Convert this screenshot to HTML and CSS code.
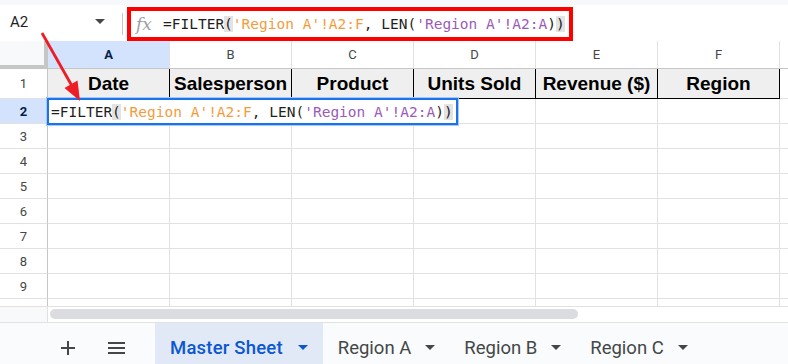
FILE: index.html
```html
<!DOCTYPE html>
<html lang="en">

<head>
	<meta charset="UTF-8">
	<meta name="viewport" content="width=device-width, initial-scale=1.0">
	<title>Master Sheet</title>
	<link rel="stylesheet" href="styles.css">
</head>

<body>
	<div class="app">
		<!-- name box + formula bar -->
		<div class="topbar">
			<div class="namebox">
				<span>A2</span>
				<span class="caret"></span>
			</div>
			<div class="divider"></div>
			<div class="fbar">
				<span class="fx">fx</span>
				<span class="formula">=FILTER<span class="paren">(</span><span class="rng1">'Region A'!A2:F</span>, LEN(<span class="rng2">'Region A'!A2:A</span>)<span class="paren">)</span></span>
			</div>
		</div>

		<!-- grid -->
		<div class="sheet">
			<div class="row hdr">
				<div class="rh corner"></div>
				<div class="c sel">A</div>
				<div class="c">B</div>
				<div class="c">C</div>
				<div class="c">D</div>
				<div class="c">E</div>
				<div class="c">F</div>
				<div class="rest"></div>
			</div>
			<div class="row r1">
				<div class="rh">1</div>
				<div class="c h">Date</div>
				<div class="c h">Salesperson</div>
				<div class="c h">Product</div>
				<div class="c h">Units Sold</div>
				<div class="c h">Revenue ($)</div>
				<div class="c h">Region</div>
				<div class="rest"></div>
			</div>
			<div class="row">
				<div class="rh sel">2</div>
				<div class="c"></div><div class="c"></div><div class="c"></div><div class="c"></div><div class="c"></div><div class="c"></div>
				<div class="rest"></div>
			</div>
			<div class="row">
				<div class="rh">3</div>
				<div class="c"></div><div class="c"></div><div class="c"></div><div class="c"></div><div class="c"></div><div class="c"></div>
				<div class="rest"></div>
			</div>
			<div class="row">
				<div class="rh">4</div>
				<div class="c"></div><div class="c"></div><div class="c"></div><div class="c"></div><div class="c"></div><div class="c"></div>
				<div class="rest"></div>
			</div>
			<div class="row">
				<div class="rh">5</div>
				<div class="c"></div><div class="c"></div><div class="c"></div><div class="c"></div><div class="c"></div><div class="c"></div>
				<div class="rest"></div>
			</div>
			<div class="row">
				<div class="rh">6</div>
				<div class="c"></div><div class="c"></div><div class="c"></div><div class="c"></div><div class="c"></div><div class="c"></div>
				<div class="rest"></div>
			</div>
			<div class="row">
				<div class="rh">7</div>
				<div class="c"></div><div class="c"></div><div class="c"></div><div class="c"></div><div class="c"></div><div class="c"></div>
				<div class="rest"></div>
			</div>
			<div class="row">
				<div class="rh">8</div>
				<div class="c"></div><div class="c"></div><div class="c"></div><div class="c"></div><div class="c"></div><div class="c"></div>
				<div class="rest"></div>
			</div>
			<div class="row">
				<div class="rh">9</div>
				<div class="c"></div><div class="c"></div><div class="c"></div><div class="c"></div><div class="c"></div><div class="c"></div>
				<div class="rest"></div>
			</div>
			<div class="row">
				<div class="rh"></div>
				<div class="c"></div><div class="c"></div><div class="c"></div><div class="c"></div><div class="c"></div><div class="c"></div>
				<div class="rest"></div>
			</div>

			<!-- in-cell editor on A2 -->
			<div class="editor">=FILTER<span class="paren">(</span><span class="rng1">'Region A'!A2:F</span>, LEN(<span class="rng2">'Region A'!A2:A</span>)<span class="paren">)</span></div>
		</div>

		<div class="hscroll">
			<div class="sc-corner"></div>
			<div class="track"><div class="thumb"></div></div>
		</div>

		<!-- sheet tabs -->
		<div class="tabs">
			<div class="tools">
				<svg width="14" height="14" viewBox="0 0 14 14">
					<path d="M7 0v14M0 7h14" stroke="#444746" stroke-width="2" />
				</svg>
				<svg width="17" height="14" viewBox="0 0 17 14">
					<path d="M0 2h17M0 7h17M0 12h17" stroke="#444746" stroke-width="2" />
				</svg>
			</div>
			<div class="tab active">Master Sheet<span class="caret"></span></div>
			<div class="tab">Region A<span class="caret"></span></div>
			<div class="tab">Region B<span class="caret"></span></div>
			<div class="tab">Region C<span class="caret"></span></div>
		</div>

		<!-- annotation arrow -->
		<svg class="arrow" width="788" height="364" viewBox="0 0 788 364">
			<line x1="42" y1="33" x2="72" y2="86" stroke="#ee1c24" stroke-width="2.8" />
			<polygon points="80,101 77.5,80.5 64.5,88" fill="#ee1c24" />
		</svg>
	</div>
</body>

</html>
```

FILE: styles.css
```css
* {
	margin: 0;
	padding: 0;
	box-sizing: border-box;
}

body {
	width: 788px;
	height: 364px;
	overflow: hidden;
	background: #fff;
	font-family: Roboto, "Liberation Sans", sans-serif;
	color: #1f1f1f;
}

.app {
	position: relative;
	width: 788px;
	height: 364px;
	display: flex;
	flex-direction: column;
}

/* top bar */
.topbar {
	height: 41px;
	flex-shrink: 0;
	display: flex;
	align-items: flex-end;
	border-top: 5px solid #f6f8fc;
}

.namebox {
	width: 122px;
	height: 36px;
	display: flex;
	align-items: center;
	justify-content: space-between;
	padding: 0 17px 3px 10px;
	font-size: 15px;
}

.caret {
	display: inline-block;
	width: 0;
	height: 0;
	border-left: 5px solid transparent;
	border-right: 5px solid transparent;
	border-top: 5px solid #444746;
}

.divider {
	width: 1px;
	height: 22px;
	background: #c4c7c5;
	align-self: center;
	margin-top: 2px;
}

.fbar {
	margin-left: 4px;
	width: 446px;
	height: 34px;
	border: 4px solid #ff0000;
	display: flex;
	align-items: center;
	padding-left: 5px;
	gap: 11px;
}

.fx {
	font-family: "DejaVu Serif", serif;
	font-style: italic;
	font-size: 17px;
	color: #9aa0a6;
	width: 16px;
}

.formula,
.editor {
	font-family: "DejaVu Sans Mono", monospace;
	font-size: 14.5px;
	color: #1f1f1f;
	white-space: pre;
}

.paren {
	background: #e3e3e3;
}

.rng1 {
	color: #f39c3c;
}

.rng2 {
	color: #9b5bb8;
}

/* grid */
.sheet {
	position: relative;
	height: 265px;
	flex-shrink: 0;
	overflow: hidden;
	display: flex;
	flex-direction: column;
}

.row {
	display: flex;
	height: 25px;
	flex-shrink: 0;
}

.row.hdr {
	height: 28px;
}

.row.r1 {
	height: 30px;
}

.row:last-of-type {
	height: 10px;
}

.rh,
.c,
.rest {
	border-right: 1px solid #e1e1e1;
	border-bottom: 1px solid #e1e1e1;
	display: flex;
	align-items: center;
	justify-content: center;
}

.rh {
	width: 48px;
	border-right-color: #c4c7c5;
	font-size: 13px;
	color: #444746;
}

.c {
	width: 122px;
}

.rest {
	flex: 1;
	border-right: none;
}

.hdr .c,
.hdr .rest {
	font-size: 13px;
	color: #444746;
	border-bottom-color: #c4c7c5;
}

.hdr .corner {
	background: #f8f9fa;
	border-right: 4px solid #c4c7c5;
	border-bottom: 4px solid #c4c7c5;
}

.sel,
.hdr .sel {
	background: #d3e3fd;
	color: #041e49;
	font-weight: 700;
}

.c.h {
	background: #efefef;
	border-right-color: #000;
	border-bottom-color: #000;
	font-family: "Liberation Sans", Arial, sans-serif;
	font-weight: 700;
	font-size: 19px;
	color: #000;
}

.editor {
	position: absolute;
	left: 47px;
	top: 57px;
	width: 411px;
	height: 27px;
	border: 2px solid #1a73e8;
	box-shadow: 0 0 0 1px #a8c7fa;
	background: #fff;
	padding-left: 2px;
	display: flex;
	align-items: center;
}

/* scroll strip */
.hscroll {
	height: 16px;
	flex-shrink: 0;
	display: flex;
	border-top: 1px solid #e1e1e1;
}

.sc-corner {
	width: 48px;
	background: #f8f9fa;
	border-right: 1px solid #e1e1e1;
}

.track {
	flex: 1;
	padding: 2px 0 0 2px;
}

.thumb {
	width: 528px;
	height: 10px;
	border-radius: 5px;
	background: #dadce0;
}

/* tabs */
.tabs {
	height: 42px;
	flex-shrink: 0;
	display: flex;
	background: #f9fbfd;
	border-top: 1px solid #e1e3e1;
}

.tools {
	width: 155px;
	display: flex;
	align-items: center;
	gap: 33px;
	padding: 8px 0 0 61px;
}

.tab {
	display: flex;
	align-items: center;
	gap: 14px;
	padding: 8px 14px 0 15px;
	font-size: 18.5px;
	color: #444746;
}

.tab.active {
	background: #e1e9f7;
	color: #0b57d0;
	font-weight: 500;
	letter-spacing: 0.2px;
	gap: 15px;
	padding-right: 15px;
}

.tab.active .caret {
	border-top-color: #0b57d0;
}

.arrow {
	position: absolute;
	left: 0;
	top: 0;
	pointer-events: none;
}
```
